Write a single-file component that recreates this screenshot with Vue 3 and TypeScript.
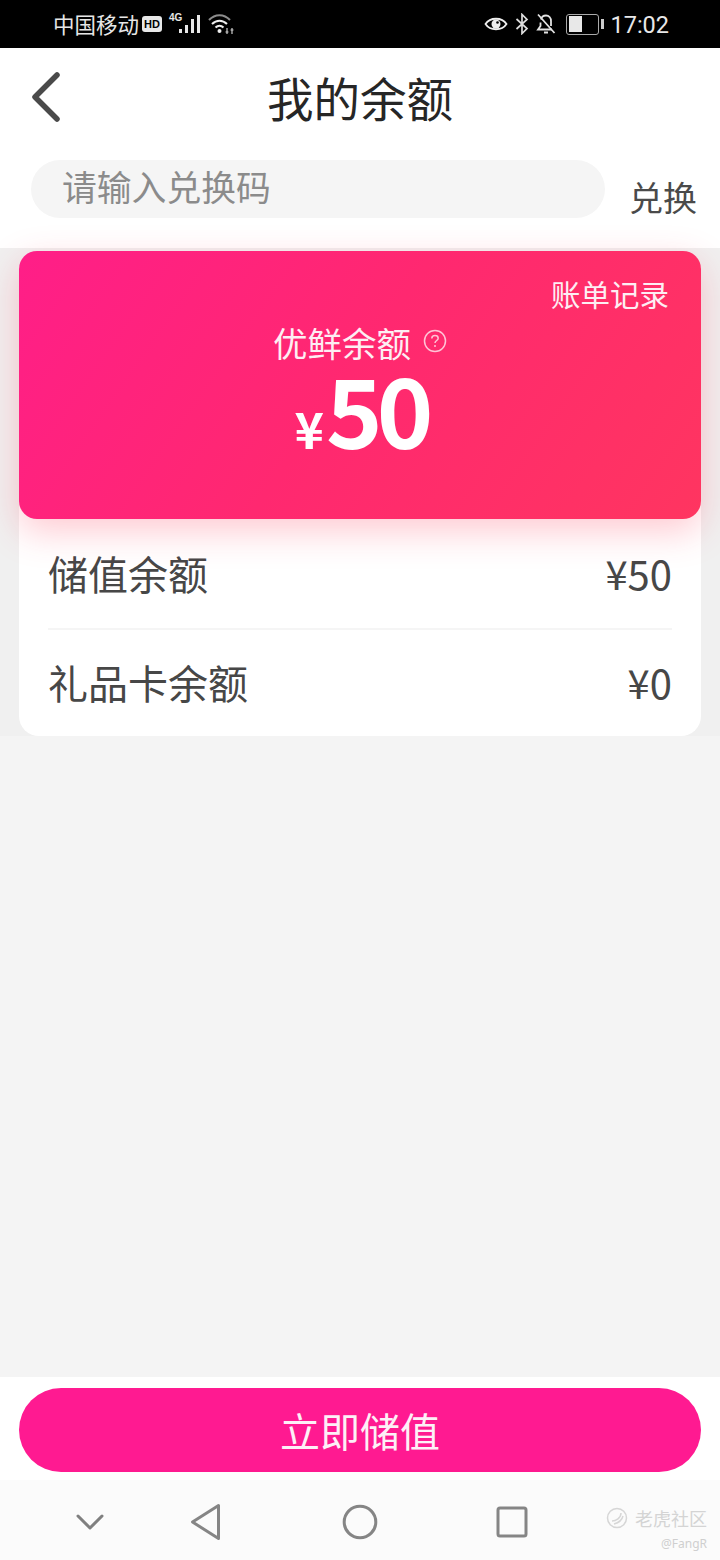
<script setup lang="ts">
const rows = [
  { label: '储值余额', value: '¥50' },
  { label: '礼品卡余额', value: '¥0' },
]
</script>

<template>
  <div class="page">
    <header class="status">
      <div class="status-side">
        <span class="carrier">中国移动</span>
        <span class="hd">HD</span>
        <span class="net">4G</span>
        <svg class="signal" width="24" height="22" viewBox="0 0 24 22">
          <g fill="#e8e8e8">
            <rect x="1" y="16" width="3" height="4" />
            <rect x="7" y="12" width="3" height="8" />
            <rect x="13" y="6" width="3" height="14" />
            <rect x="19" y="2" width="3" height="18" />
          </g>
        </svg>
        <svg class="wifi" width="28" height="24" viewBox="0 0 28 24" fill="none">
          <path d="M2 8C8 1.500 17 1.500 23 8" stroke="#8c8c8c" stroke-width="2" />
          <path d="M5 12C9.500 7.500 15.500 7.500 20 12" stroke="#eee" stroke-width="2" />
          <path d="M8.500 15.500C11 13 14 13 16.500 15.500" stroke="#eee" stroke-width="2" />
          <circle cx="12.500" cy="19" r="2" fill="#eee" />
          <path d="M20 16v6M18.500 20h3M25 16v6M23.500 18h3" stroke="#ccc" stroke-width="1.200" />
        </svg>
      </div>
      <div class="status-side">
        <svg width="24" height="18" viewBox="0 0 24 18" fill="none">
          <path d="M1.500 9C6 2 18 2 22.500 9C18 16 6 16 1.500 9Z" stroke="#eee" stroke-width="1.800" />
          <circle cx="12" cy="9" r="4.500" fill="#eee" />
          <circle cx="13.500" cy="7.500" r="1.300" fill="#000" />
        </svg>
        <svg class="bt" width="14" height="22" viewBox="0 0 14 22" fill="none">
          <path d="M1.500 6L12 15.500L7 20.500V1.500L12 6.500L1.500 16" stroke="#ddd" stroke-width="1.700" />
        </svg>
        <svg class="bell" width="20" height="22" viewBox="0 0 20 22" fill="none">
          <path d="M5 6.500C5.500 4 7.500 2.500 10 2.500C13 2.500 15 5 15 8V13M4.500 9.500V13L2 16.500H16" stroke="#e2e2e2" stroke-width="1.800" />
          <path d="M8 19.500H12M2 1.500L18.500 20" stroke="#e2e2e2" stroke-width="1.800" />
        </svg>
        <div class="battery">
          <div class="battery-body"><div class="battery-fill"></div></div>
          <div class="battery-tip"></div>
        </div>
        <span class="clock">17:02</span>
      </div>
    </header>

    <section class="top">
      <div class="nav">
        <svg class="back" width="34" height="54" viewBox="0 0 34 54" fill="none">
          <path d="M27 5L5 27L27 49" stroke="#4a4a4a" stroke-width="5.500" stroke-linecap="round" stroke-linejoin="round" />
        </svg>
        <h1 class="title">我的余额</h1>
      </div>
      <div class="redeem">
        <div class="code-input">请输入兑换码</div>
        <span class="redeem-btn">兑换</span>
      </div>
    </section>

    <section class="balance-band">
      <div class="panel">
        <div class="hero">
          <div class="bill">账单记录</div>
          <div class="hero-label">
            <span>优鲜余额</span>
            <svg width="24" height="24" viewBox="0 0 24 24" fill="none">
              <circle cx="12" cy="12" r="10.500" stroke="#ffc4d6" stroke-width="1.500" />
              <path d="M8.800 9.500C8.800 7.600 10.200 6.600 12 6.600C13.900 6.600 15.200 7.700 15.200 9.300C15.200 11.500 12 11.500 12 14" stroke="#ffc4d6" stroke-width="1.500" />
              <circle cx="12" cy="17" r="1" fill="#ffc4d6" />
            </svg>
          </div>
          <div class="hero-amount"><span class="yen">¥</span><span class="num">50</span></div>
        </div>
        <div v-for="row in rows" :key="row.label" class="row">
          <span>{{ row.label }}</span>
          <span>{{ row.value }}</span>
        </div>
      </div>
    </section>

    <main class="fill"></main>

    <section class="action">
      <button class="cta" type="button">立即储值</button>
    </section>

    <footer class="sysnav">
      <svg class="nav-down" width="30" height="20" viewBox="0 0 30 20" fill="none">
        <path d="M3 4L15 16L27 4" stroke="#7f7f7f" stroke-width="3" stroke-linecap="round" stroke-linejoin="round" />
      </svg>
      <svg class="nav-back" width="32" height="38" viewBox="0 0 32 38" fill="none">
        <path d="M28.500 2.500V35.500L2.500 19Z" stroke="#858585" stroke-width="3" stroke-linejoin="round" />
      </svg>
      <svg class="nav-home" width="36" height="36" viewBox="0 0 36 36" fill="none">
        <circle cx="18" cy="18" r="15.800" stroke="#858585" stroke-width="3" />
      </svg>
      <svg class="nav-recent" width="32" height="32" viewBox="0 0 32 32" fill="none">
        <rect x="2" y="2" width="28" height="28" rx="2" stroke="#858585" stroke-width="3" />
      </svg>
      <div class="mark">
        <div class="mark-line">
          <svg width="22" height="22" viewBox="0 0 22 22" fill="none">
            <circle cx="11" cy="11" r="9.500" stroke="#d6d6d6" stroke-width="1.500" />
            <path d="M6 14C10 14 15 11 15 6M8 17C12 16 16 13 17 9" stroke="#d6d6d6" stroke-width="1.500" />
          </svg>
          <span>老虎社区</span>
        </div>
        <div class="mark-user">@FangR</div>
      </div>
    </footer>
  </div>
</template>

<style>
html, body { margin: 0; padding: 0; background: #f4f4f4; }
</style>

<style scoped>
.page {
  width: 720px;
  height: 1560px;
  display: flex;
  flex-direction: column;
  font-family: "Noto Sans CJK SC", "Noto Sans", sans-serif;
  overflow: hidden;
  background: #f4f4f4;
}
.status {
  height: 48px;
  flex: none;
  background: #000;
  color: #e6e6e6;
  display: flex;
  align-items: center;
  justify-content: space-between;
  padding: 0 51px 0 53px;
  box-sizing: border-box;
}
.status-side { display: flex; align-items: center; }
.carrier { font-size: 21.500px; line-height: 26px; }
.hd {
  margin-left: 3px;
  width: 20px;
  height: 16px;
  border-radius: 3px;
  background: #e8e8e8;
  color: #000;
  font: 700 11px/16px "Liberation Sans", sans-serif;
  text-align: center;
}
.net {
  font: 700 10px/12px "Liberation Sans", sans-serif;
  margin: -12px 0 0 7px;
  width: 13px;
}
.signal { margin-left: -4px; }
.wifi { margin-left: 5px; }
.bt { margin-left: 7px; }
.bell { margin-left: 7px; }
.battery { display: flex; align-items: center; margin-left: 10px; }
.battery-body {
  width: 28px;
  height: 16px;
  border: 1.500px solid #aaa;
  border-radius: 3px;
  padding: 1.500px;
}
.battery-fill { width: 13px; height: 100%; background: #e8e8e8; }
.battery-tip { width: 3px; height: 10px; margin-left: 2px; background: #ccc; }
.clock {
  font: 400 23.500px/28px Roboto, sans-serif;
  margin: 1px 0 0 6px;
  color: #e8e8e8;
}
.top {
  height: 200px;
  flex: none;
  background: #fff;
}
.nav {
  height: 102px;
  position: relative;
  display: flex;
  align-items: center;
  justify-content: center;
}
.back { position: absolute; left: 30px; top: 22px; }
.title {
  margin: 0;
  font-size: 46.500px;
  line-height: 60px;
  font-weight: 400;
  color: #262626;
  margin-top: -4px;
}
.redeem {
  display: flex;
  align-items: flex-start;
  padding: 10px 23px 0 31px;
}
.code-input {
  width: 574px;
  height: 58px;
  border-radius: 29px;
  background: #f5f5f5;
  color: #8b8b8b;
  font-size: 34.800px;
  line-height: 52px;
  padding-left: 31px;
  box-sizing: border-box;
}
.redeem-btn {
  margin: 13px 0 0 24px;
  font-size: 34px;
  line-height: 48px;
  color: #4a4a4a;
}
.balance-band {
  flex: none;
  height: 488px;
  padding: 3px 19px 0;
  box-sizing: border-box;
  background: #f0f0f0;
}
.panel {
  background: #fff;
  border-radius: 20px;
  height: 485px;
}
.hero {
  position: relative;
  height: 268px;
  border-radius: 18px;
  background: linear-gradient(125deg, #ff1e88 0%, #ff2870 48%, #ff3560 100%);
  color: #fff;
  box-shadow: 0 12px 36px rgba(255, 60, 90, 0.28);
  display: flex;
  flex-direction: column;
  align-items: center;
  padding-top: 74px;
  box-sizing: border-box;
}
.bill {
  position: absolute;
  right: 32px;
  top: 21px;
  font-size: 29.500px;
  line-height: 42px;
  color: #fdeef3;
}
.hero-label {
  display: flex;
  align-items: center;
  gap: 12px;
  font-size: 34.500px;
  line-height: 34px;
  color: #fdeef3;
}
.hero-label svg { margin-top: -2px; }
.hero-amount {
  display: flex;
  align-items: baseline;
  margin: 1px 0 0 2px;
}
.yen { font-size: 50px; line-height: 96px; font-weight: 700; margin-right: 2px; }
.num { font-size: 96px; line-height: 96px; font-weight: 700; letter-spacing: -6px; }
.row {
  margin: 0 29px;
  height: 109px;
  padding-bottom: 2px;
  box-sizing: border-box;
  display: flex;
  align-items: center;
  justify-content: space-between;
  font-size: 40px;
  color: #474747;
}
.row + .row { border-top: 2px solid #f5f5f5; height: 108px; }
.fill { flex: 1; }
.action {
  flex: none;
  height: 103px;
  background: #fff;
  padding: 11px 19px 0;
  box-sizing: border-box;
}
.cta {
  display: block;
  width: 100%;
  height: 84px;
  border: 0;
  border-radius: 42px;
  background: #ff1a91;
  color: #fdf0f7;
  font-family: inherit;
  font-size: 40px;
  padding: 0;
}
.sysnav {
  position: relative;
  flex: none;
  height: 80px;
  background: #fbfbfb;
  display: flex;
  align-items: center;
  padding: 3px 0 0 75px;
  box-sizing: border-box;
}
.nav-back { margin-left: 85px; }
.nav-home { margin-left: 120px; }
.nav-recent { margin-left: 118px; }
.mark {
  position: absolute;
  right: 13px;
  top: 26px;
  color: #d4d4d4;
  text-align: right;
}
.mark-line { display: flex; align-items: center; gap: 7px; font-size: 18px; line-height: 24px; }
.mark-user { font-size: 12px; line-height: 16px; margin-top: 6px; font-family: "Noto Sans", sans-serif; color: #cfcfcf; }
</style>
